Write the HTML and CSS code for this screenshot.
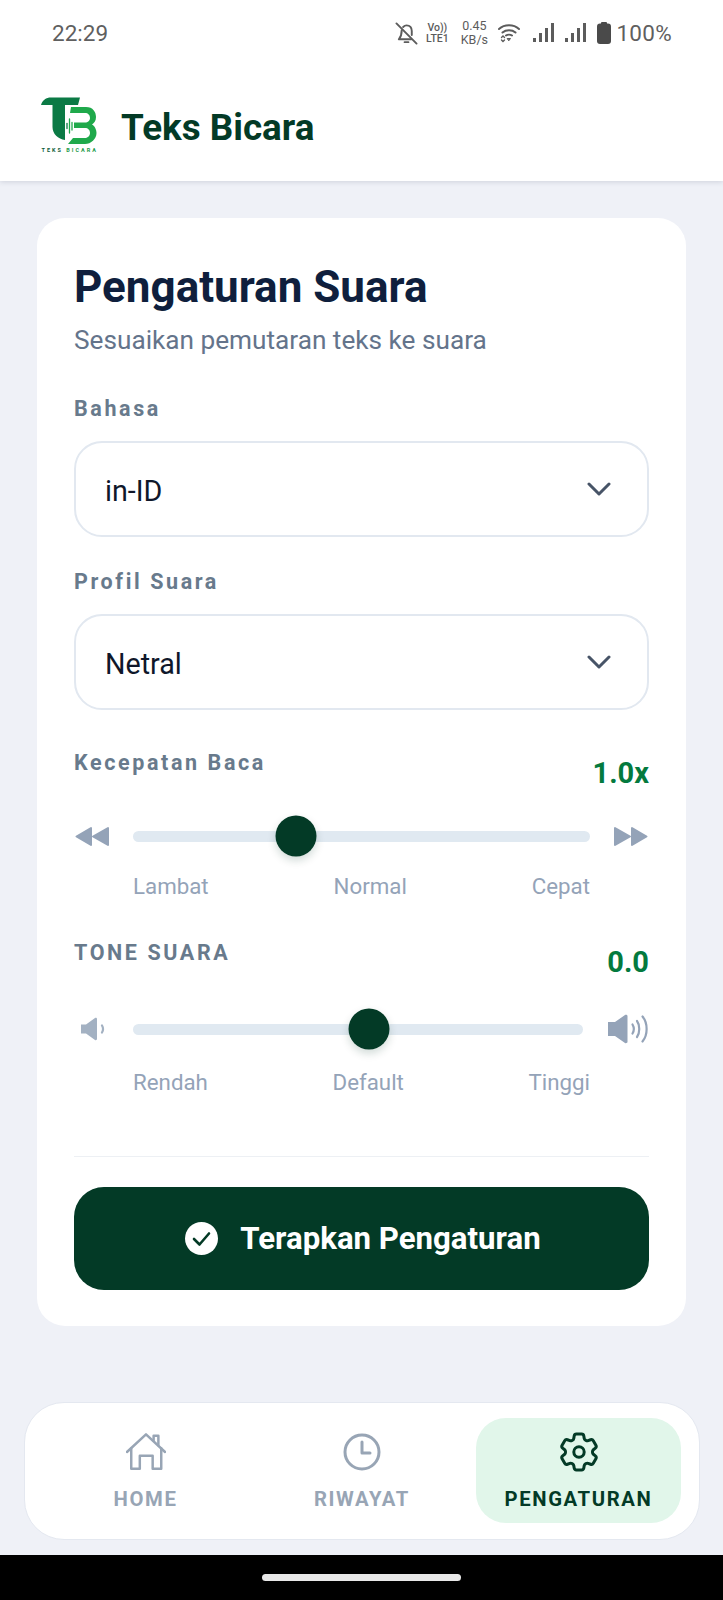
FILE: index.html
```html
<!DOCTYPE html>
<html lang="id">
<head>
<meta charset="utf-8">
<title>Teks Bicara</title>
<link rel="stylesheet" href="styles.css">
</head>
<body>
<div class="app">
  <div class="top">
    <div class="status">
      <span class="clock-text">22:29</span>
      <div class="status-icons">
        <svg class="st-bell" viewBox="0 0 24 24" fill="none" stroke="#5c5c5c" stroke-width="2" stroke-linecap="round" stroke-linejoin="round"><path d="M7 8.5C7 12 6.5 15 4 18H17"/><path d="M8.5 5.2C9.7 4 11 3.5 12 3.5C15.5 3.5 17.5 6 17.5 9.5V13.5"/><path d="M10 21h4"/><path d="M1.5 1.5L22.5 22.5"/></svg>
        <div class="st-lte"><span>Vo))</span><span>LTE1</span></div>
        <div class="st-speed"><span>0.45</span><span>KB/s</span></div>
        <svg class="st-wifi" viewBox="0 0 22 20" fill="none" stroke="#5c5c5c" stroke-width="2" stroke-linecap="round"><path d="M1 6C6.5 1 15.500 1 21 6"/><path d="M4.500 9.500C8 6.500 14 6.500 17.500 9.500"/><path d="M8 12.500C9.500 11.500 12.500 11.500 14 12.500"/><path d="M3.500 14.500L5 13L6.500 14.500M3.500 17L5 18.500L6.500 17" stroke-width="1.400"/><path d="M9.500 15.500H12.500L11 17.500Z" fill="#5c5c5c" stroke-width="1"/></svg>
        <svg class="st-signal" viewBox="0 0 21 20" fill="#5c5c5c"><rect x="0" y="15" width="3" height="4"/><rect x="6" y="10" width="3" height="9"/><rect x="12" y="5" width="3" height="14"/><rect x="18" y="0" width="3" height="19"/></svg>
        <svg class="st-signal" viewBox="0 0 21 20" fill="#5c5c5c"><rect x="0" y="15" width="3" height="4"/><rect x="6" y="10" width="3" height="9"/><rect x="12" y="5" width="3" height="14"/><rect x="18" y="0" width="3" height="19"/></svg>
        <svg class="st-battery" viewBox="0 0 14 22" fill="#4a4a4a"><rect x="4" y="0" width="6" height="3" rx="1"/><rect x="0" y="1.500" width="14" height="20.500" rx="3"/></svg>
        <span class="st-pct">100%</span>
      </div>
    </div>
    <header class="header">
      <svg class="logo" viewBox="0 0 56 56">
        <path fill="#0b7a45" d="M0 8C1.500 3 5 .5 10 .5H39L37 8H24V43C17 42 11.500 37 11.500 30V8Z"/>
        <path fill="#1fa94b" d="M30 10H45C52 10 55 15 55 20C55 24 53 26 51 27.500C54 29 55.500 33 55.500 36C55.500 42 50 47 44 47H27L32 41H44C47 41 49 38.500 49 36C49 33 47 31 44 31H33V25.500H44C47 25.500 49 23.500 49 21C49 18 47 16 44 16H29Z"/>
        <g stroke="#0b7a45" stroke-width="1.300" stroke-linecap="round"><path d="M26 26.500V31.500"/></g>
        <g stroke="#1fa94b" stroke-width="1.300" stroke-linecap="round"><path d="M28.500 22V36M31 25.500V33"/></g>
        <text class="logo-text" x="0.500" y="54.500"><tspan fill="#0d5c3a">TEKS </tspan><tspan fill="#1c9a48">BICARA</tspan></text>
      </svg>
      <h1 class="brand">Teks Bicara</h1>
    </header>
  </div>

  <main class="main">
    <section class="card">
      <h2 class="title">Pengaturan Suara</h2>
      <p class="subtitle">Sesuaikan pemutaran teks ke suara</p>

      <div class="field-label first">Bahasa</div>
      <div class="select">
        <span class="select-value">in-ID</span>
        <svg class="chev" viewBox="0 0 24 14" fill="none" stroke="#475467" stroke-width="3" stroke-linecap="round" stroke-linejoin="round"><path d="M2 2L12 12L22 2"/></svg>
      </div>

      <div class="field-label second">Profil Suara</div>
      <div class="select">
        <span class="select-value">Netral</span>
        <svg class="chev" viewBox="0 0 24 14" fill="none" stroke="#475467" stroke-width="3" stroke-linecap="round" stroke-linejoin="round"><path d="M2 2L12 12L22 2"/></svg>
      </div>

      <div class="slider-head speed-head">
        <span class="field-label">Kecepatan Baca</span>
        <span class="value">1.0x</span>
      </div>
      <div class="slider speed-slider">
        <svg class="ic-speed" viewBox="0 0 34 21" fill="#94a3b8" stroke="#94a3b8" stroke-width="2" stroke-linejoin="round"><path d="M1.500 10.500L16 2V19Z"/><path d="M18 10.500L33 2V19Z"/></svg>
        <div class="track"><div class="thumb" style="left:35.700%"></div></div>
        <svg class="ic-speed" viewBox="0 0 34 21" fill="#94a3b8" stroke="#94a3b8" stroke-width="2" stroke-linejoin="round"><path d="M32.500 10.500L18 2V19Z"/><path d="M16 10.500L1 2V19Z"/></svg>
      </div>
      <div class="ticks speed-ticks"><span>Lambat</span><span>Normal</span><span>Cepat</span></div>

      <div class="slider-head tone-head">
        <span class="field-label caps">TONE SUARA</span>
        <span class="value">0.0</span>
      </div>
      <div class="slider tone-slider">
        <svg class="ic-low" viewBox="0 0 24 24" fill="none"><path fill="#a3b1c2" d="M0 7.500H5L14 1C15 .5 16 1 16 2V22C16 23 15 23.500 14 23L5 16.500H0Z"/><path d="M21 8.500C22.500 11 22.500 13 21 15.500" stroke="#a3b1c2" stroke-width="2.200" stroke-linecap="round"/></svg>
        <div class="track"><div class="thumb" style="left:52.400%"></div></div>
        <svg class="ic-high" viewBox="0 0 40 30" fill="none" stroke="#94a3b8" stroke-width="2.200" stroke-linecap="round"><path fill="#94a3b8" stroke="none" d="M0 8H7L17 1C18 .5 19.500 1 19.500 2V28C19.500 29 18 29.500 17 29L7 22H0Z"/><path d="M24.500 10.500C26 13 26 17 24.500 19.500"/><path d="M29 7C32 11 32 19 29 23"/><path d="M34.500 2.500C40 9 40 21 34.500 27.500"/></svg>
      </div>
      <div class="ticks tone-ticks"><span>Rendah</span><span>Default</span><span>Tinggi</span></div>

      <hr class="divider">

      <button class="apply" type="button">
        <svg class="apply-ic" viewBox="0 0 33 33"><circle cx="16.500" cy="16.500" r="16.500" fill="#fff"/><path d="M9 17L14.500 22.500L24 11.500" fill="none" stroke="#033a26" stroke-width="2.600" stroke-linecap="round" stroke-linejoin="round"/></svg>
        <span>Terapkan Pengaturan</span>
      </button>
    </section>
  </main>

  <nav class="nav">
    <div class="nav-item">
      <svg class="nav-ic" viewBox="0 0 42 40" fill="none" stroke="currentColor" stroke-width="2.600" stroke-linecap="round" stroke-linejoin="round"><path d="M1 20L21 1.500L41 20"/><path d="M5.500 16V37.500H14.500V24H28V37.500H37V16"/><path d="M29 8V3H34V13"/></svg>
      <span>HOME</span>
    </div>
    <div class="nav-item">
      <svg class="nav-ic" viewBox="0 0 40 40" fill="none" stroke="currentColor" stroke-width="3" stroke-linecap="round" stroke-linejoin="round"><circle cx="20" cy="20" r="17"/><path d="M20 10V21H28"/></svg>
      <span>RIWAYAT</span>
    </div>
    <div class="nav-item active">
      <svg class="nav-ic" viewBox="2 2 20 20" fill="none" stroke="currentColor" stroke-width="1.500" stroke-linecap="round" stroke-linejoin="round"><path d="M9.594 3.940c.090-.542.560-.940 1.110-.940h2.593c.550 0 1.020.398 1.110.940l.213 1.281c.063.374.313.686.645.870.074.040.147.083.220.127.325.196.720.257 1.075.124l1.217-.456a1.125 1.125 0 0 1 1.370.490l1.296 2.247a1.125 1.125 0 0 1-.260 1.431l-1.003.827c-.293.241-.438.613-.430.992a7.723 7.723 0 0 1 0 .255c-.008.378.137.750.430.991l1.004.827c.424.350.534.955.260 1.430l-1.298 2.247a1.125 1.125 0 0 1-1.369.491l-1.217-.456c-.355-.133-.750-.072-1.076.124a6.470 6.470 0 0 1-.220.128c-.331.183-.581.495-.644.869l-.213 1.281c-.090.543-.560.940-1.110.940h-2.594c-.550 0-1.019-.398-1.110-.940l-.213-1.281c-.062-.374-.312-.686-.644-.870a6.520 6.520 0 0 1-.220-.127c-.325-.196-.720-.257-1.076-.124l-1.217.456a1.125 1.125 0 0 1-1.369-.490l-1.297-2.247a1.125 1.125 0 0 1 .260-1.431l1.004-.827c.292-.240.437-.613.430-.991a6.932 6.932 0 0 1 0-.255c.007-.380-.138-.751-.430-.992l-1.004-.827a1.125 1.125 0 0 1-.260-1.430l1.297-2.247a1.125 1.125 0 0 1 1.370-.491l1.216.456c.356.133.751.072 1.076-.124.072-.044.146-.086.220-.128.332-.183.582-.495.644-.869l.214-1.280Z"/><circle cx="12" cy="12" r="2.600"/></svg>
      <span>PENGATURAN</span>
    </div>
  </nav>

  <div class="sysbar"><div class="homebar"></div></div>
</div>
</body>
</html>
```

FILE: styles.css
```css
* { box-sizing: border-box; }
html, body { margin: 0; padding: 0; }
body {
  font-family: Roboto, "Liberation Sans", sans-serif;
  background: #eff1f7;
}
.app {
  width: 723px;
  height: 1600px;
  display: flex;
  flex-direction: column;
  overflow: hidden;
}
.top {
  background: #fff;
  height: 181px;
  box-shadow: 0 1px 5px rgba(40, 50, 80, .16);
  position: relative;
}
.status {
  height: 66px;
  display: flex;
  align-items: center;
  justify-content: space-between;
  padding: 0 52px;
  color: #5f5f5f;
}
.clock-text { font-size: 22.500px; }
.status-icons { display: flex; align-items: center; }
.st-bell { width: 23px; height: 23px; margin-right: 6px; }
.st-lte, .st-speed {
  display: flex;
  flex-direction: column;
  color: #5c5c5c;
  text-align: center;
}
.st-lte { font-size: 10.500px; line-height: 11px; width: 26px; margin-right: 9px; font-weight: 500; }
.st-speed { font-size: 12.500px; line-height: 14px; width: 30px; margin-right: 9px; }
.st-wifi { width: 22px; height: 20px; margin-right: 13px; }
.st-signal { width: 21px; height: 20px; margin-right: 11px; }
.st-battery { width: 14px; height: 22px; margin-right: 5px; }
.st-pct { font-size: 22.500px; color: #5f5f5f; letter-spacing: .3px; margin-right: -1px; }

.header {
  height: 115px;
  display: flex;
  align-items: flex-start;
  padding: 31px 0 0 41px;
}
.logo { width: 56px; height: 56px; flex: none; }
.logo-text { font-family: Roboto, sans-serif; font-size: 5.500px; font-weight: 700; letter-spacing: 2px; }
.brand {
  margin: 10px 0 0 24px;
  font-size: 36.800px;
  line-height: 42px;
  font-weight: 700;
  color: #033a26;
}

.main { flex: 1; padding: 37px 37px 0; min-height: 0; }
.card {
  background: #fff;
  border-radius: 28px;
  height: 1108px;
  padding: 45px 37px 36px;
}
.title {
  margin: 0;
  font-size: 44px;
  line-height: 48px;
  font-weight: 700;
  color: #0f1f3d;
}
.subtitle {
  margin: 13px 0 0;
  font-size: 26.200px;
  line-height: 32px;
  color: #64748b;
}
.field-label {
  font-size: 21.500px;
  line-height: 24px;
  font-weight: 700;
  letter-spacing: 2.600px;
  color: #687a8c;
}
.field-label.first { margin-top: 41px; }
.field-label.second { margin-top: 33px; }
.select {
  margin-top: 20px;
  height: 96px;
  border: 2px solid #e2e8f0;
  border-radius: 28px;
  display: flex;
  align-items: center;
  justify-content: space-between;
  padding: 0 36px 0 29px;
  font-size: 28.700px;
  color: #0f172a;
}
.select-value { margin-top: 4px; }
.chev { width: 24px; height: 14px; }
.slider-head {
  display: flex;
  justify-content: space-between;
  align-items: flex-start;
}
.speed-head { margin-top: 41px; }
.tone-head { margin-top: 41px; }
.value {
  margin-top: 6px;
  font-size: 29px;
  line-height: 32px;
  font-weight: 700;
  color: #047a3e;
}
.tone-head .value { margin-top: 5px; }
.slider {
  height: 42px;
  display: flex;
  align-items: center;
}
.speed-slider { margin-top: 26px; }
.tone-slider { margin-top: 30px; }
.ic-speed { width: 34px; height: 21px; flex: none; margin: 0 1px; }
.speed-slider .track { margin: 0 23px 0 23px; }
.ic-low { width: 24px; height: 24px; flex: none; margin-left: 7px; margin-right: -5px; }
.tone-slider .track { margin: 0 25px 0 33px; }
.ic-high { width: 40px; height: 30px; flex: none; margin-right: 1px; }
.track {
  flex: 1;
  height: 11px;
  border-radius: 6px;
  background: #e0e9f1;
  position: relative;
}
.thumb {
  position: absolute;
  top: 50%;
  width: 41px;
  height: 41px;
  border-radius: 50%;
  background: #033a26;
  transform: translate(-50%, -50%);
  box-shadow: 0 4px 8px rgba(3, 58, 38, .18);
}
.ticks {
  display: flex;
  justify-content: space-between;
  padding: 0 59px;
  font-size: 22.300px;
  line-height: 28px;
  color: #94a3b8;
}
.speed-ticks { margin-top: 15px; }
.tone-ticks { margin-top: 18px; }
.divider {
  margin: 60px 0 0;
  border: 0;
  height: 1px;
  background: #edf0f4;
}
.apply {
  margin-top: 30px;
  width: 100%;
  height: 103px;
  border: 0;
  border-radius: 30px;
  background: #033a26;
  color: #fff;
  display: flex;
  align-items: center;
  justify-content: center;
  gap: 22px;
  padding: 0 0 0 3px;
  font-family: inherit;
  font-size: 31.200px;
  font-weight: 700;
}
.apply-ic { width: 33px; height: 33px; }

.nav {
  height: 138px;
  margin: 0 23px 15px 24px;
  background: #fff;
  border: 1px solid #e4e8f0;
  border-radius: 40px;
  padding: 15px 18px 16px 18px;
  display: grid;
  grid-template-columns: repeat(3, 205px);
  column-gap: 11.500px;
}
.nav-item {
  border-radius: 30px;
  display: flex;
  flex-direction: column;
  align-items: center;
  padding-top: 14px;
  color: #98a5b5;
  font-size: 20.300px;
  line-height: 24px;
  font-weight: 700;
  letter-spacing: 1.600px;
}
.nav-item span { margin-top: 15px; }
.nav-item.active { background: #e1f6ea; color: #033a26; }
.nav-ic { width: 40px; height: 40px; }
.sysbar {
  height: 45px;
  background: #000;
  display: flex;
  justify-content: center;
  padding-top: 19px;
}
.homebar { width: 199px; height: 7px; border-radius: 4px; background: #e8e8e8; }
```
